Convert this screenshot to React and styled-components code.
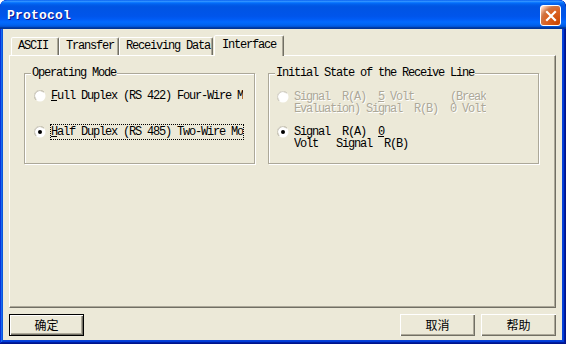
import React from "react";
import styled, { createGlobalStyle } from "styled-components";

const GlobalStyle = createGlobalStyle`
  html, body {
    margin: 0;
    padding: 0;
    background: #fff;
  }
  body {
    font-family: "Liberation Mono", "DejaVu Sans Mono", monospace;
    font-size: 12px;
  }
`;

const mono = `
  font-family: "Liberation Mono", "DejaVu Sans Mono", monospace;
  font-size: 12px;
  letter-spacing: -1.2px;
`;

const Window = styled.div`
  width: 566px;
  height: 344px;
  box-sizing: border-box;
  display: flex;
  flex-direction: column;
  background: #0842d6;
  border-radius: 7px 7px 0 0;
  overflow: hidden;
  box-shadow: inset -1px -1px #00138c, inset 1px 1px #0831d9,
    inset -2px -2px #001ea0, inset 2px 2px #166aee, inset -3px -3px #003bda,
    inset 3px 3px #0855dd;
`;

const TitleBar = styled.div`
  flex: none;
  height: 29px;
  display: flex;
  align-items: center;
  justify-content: space-between;
  padding: 0 5px 0 7px;
  border-radius: 7px 7px 0 0;
  background: linear-gradient(
    180deg,
    #0058ee 0%,
    #3593ff 4%,
    #288eff 6%,
    #127dff 8%,
    #036ffc 10%,
    #0262ee 14%,
    #0057e5 20%,
    #0054e3 24%,
    #0055eb 56%,
    #005bf5 66%,
    #026afe 76%,
    #0062ef 86%,
    #0052d6 92%,
    #0040ab 94%,
    #003092 100%
  );
`;

const TitleText = styled.span`
  font-family: "Liberation Mono", "DejaVu Sans Mono", monospace;
  font-weight: bold;
  font-size: 13px;
  letter-spacing: 0.2px;
  color: #fff;
  text-shadow: 1px 1px #0f1089;
  margin-top: 2px;
`;

const CloseButton = styled.button`
  width: 21px;
  height: 21px;
  box-sizing: border-box;
  margin-top: 2px;
  padding: 0;
  display: grid;
  place-items: center;
  border: 1px solid #fff;
  border-radius: 3px;
  background: radial-gradient(
    circle at 90% 90%,
    #cc4600 0%,
    #dc6527 55%,
    #cd7546 70%,
    #ffccb2 90%,
    #fff 100%
  );
`;

const Client = styled.div`
  flex: 1;
  min-height: 0;
  margin: 0 4px 4px 3px;
  padding: 6px 6px 4px 6px;
  background: #ece9d8;
  display: flex;
  flex-direction: column;
`;

const TabStrip = styled.div`
  display: flex;
  align-items: flex-end;
  height: 21px;
  padding-left: 2px;
  margin-bottom: -1px;
`;

const Tab = styled.div`
  ${mono}
  box-sizing: border-box;
  width: ${(p) => p.$w}px;
  height: ${(p) => (p.$active ? 21 : 18)}px;
  margin-bottom: ${(p) => (p.$active ? 0 : 1)}px;
  margin-left: ${(p) => (p.$active ? 1 : 0)}px;
  padding-left: ${(p) => (p.$active ? 7 : 6)}px;
  line-height: ${(p) => (p.$active ? 18 : 16)}px;
  border: 1px solid;
  border-bottom: none;
  border-color: #fff #716f64 transparent #fff;
  border-radius: 2px 2px 0 0;
  box-shadow: inset -1px 0 #aca899;
  background: #ece9d8;
  color: #000;
  white-space: nowrap;
  position: ${(p) => (p.$active ? "relative" : "static")};
`;

const Panel = styled.div`
  flex: 1;
  min-height: 0;
  box-sizing: border-box;
  border: 1px solid;
  border-color: #fff #716f64 #716f64 #fff;
  box-shadow: inset -1px -1px #aca899;
  display: flex;
  align-items: flex-start;
  gap: 13px;
  padding: 11px 0 0 14px;
`;

const Group = styled.fieldset`
  margin: 0;
  padding: 0;
  min-width: 0;
  box-sizing: border-box;
  width: ${(p) => p.$w}px;
  height: 97px;
  border: 1px solid #aca899;
  box-shadow: inset 1px 1px #fff, 1px 1px #fff;
`;

const Legend = styled.legend`
  ${mono}
  margin-left: 6px;
  padding: 0 1px;
  line-height: 12px;
  color: #000;
  background: #ece9d8;
`;

const RadioList = styled.div`
  display: flex;
  flex-direction: column;
  padding-top: ${(p) => p.$top}px;
  padding-left: ${(p) => p.$inset}px;
  gap: ${(p) => p.$gap}px;
`;

const Row = styled.div`
  display: flex;
  align-items: ${(p) => (p.$multi ? "flex-start" : "center")};
  gap: 4px;
  svg {
    flex: none;
    margin-top: ${(p) => (p.$multi ? 1 : 0)}px;
  }
`;

const Label = styled.span`
  ${mono}
  display: block;
  box-sizing: content-box;
  width: ${(p) => (p.$w ? `${p.$w}px` : "auto")};
  overflow: hidden;
  white-space: pre;
  line-height: ${(p) => p.$lh}px;
  border: 1px dotted ${(p) => (p.$focused ? "#000" : "transparent")};
  color: ${(p) => (p.$disabled ? "#aca899" : "#000")};
  text-shadow: ${(p) => (p.$disabled ? "1px 1px #fff" : "none")};
  u {
    text-underline-offset: 1px;
  }
`;

const Footer = styled.div`
  flex: none;
  display: flex;
  justify-content: space-between;
  margin-top: 6px;
`;

const ButtonGroup = styled.div`
  display: flex;
  gap: 6px;
`;

const Button = styled.button`
  width: 75px;
  height: 22px;
  box-sizing: border-box;
  padding: 0;
  background: #ece9d8;
  font-family: "Noto Sans CJK SC", "Noto Sans", sans-serif;
  font-size: 12px;
  line-height: 18px;
  color: #000;
  border: ${(p) => (p.$default ? "1px solid #000" : "none")};
  box-shadow: inset 1px 1px #fff, inset -1px -1px #716f64,
    inset -2px -2px #aca899;
`;

function Radio({ checked, disabled }) {
  return (
    <svg width="12" height="12" viewBox="0 0 12 12">
      <circle cx="6" cy="6" r="5.5" fill="#fff" />
      <path
        d="M2.1 9.9 A5.5 5.5 0 0 1 9.9 2.1"
        fill="none"
        stroke={disabled ? "#bdbaad" : "#aca899"}
      />
      <path
        d="M1.8 8.6 A4.6 4.6 0 0 1 8.6 1.8"
        fill="none"
        stroke={disabled ? "#dedbd0" : "#d8d5c8"}
      />
      {checked && <circle cx="6" cy="6" r="2" fill="#000" />}
    </svg>
  );
}

function CloseIcon() {
  return (
    <svg width="12" height="12" viewBox="0 0 12 12">
      <path
        d="M2 2 L10 10 M10 2 L2 10"
        stroke="#fff"
        strokeWidth="2.2"
        strokeLinecap="square"
      />
    </svg>
  );
}

const tabs = [
  { label: "ASCII", w: 48 },
  { label: "Transfer", w: 60 },
  { label: "Receiving Data", w: 94 },
  { label: "Interface", w: 70, active: true },
];

export default function App() {
  return (
    <>
      <GlobalStyle />
      <Window>
        <TitleBar>
          <TitleText>Protocol</TitleText>
          <CloseButton aria-label="Close">
            <CloseIcon />
          </CloseButton>
        </TitleBar>
        <Client>
          <TabStrip>
            {tabs.map((t) => (
              <Tab key={t.label} $w={t.w} $active={t.active}>
                {t.label}
              </Tab>
            ))}
          </TabStrip>
          <Panel>
            <Group $w={231}>
              <Legend>Operating Mode</Legend>
              <RadioList $top={9} $gap={20} $inset={9}>
                <Row>
                  <Radio />
                  <Label $w={192} $lh={14}>
                    <u>F</u>ull Duplex (RS 422) Four-Wire Mode
                  </Label>
                </Row>
                <Row>
                  <Radio checked />
                  <Label $w={192} $lh={14} $focused>
                    <u>H</u>alf Duplex (RS 485) Two-Wire Mode
                  </Label>
                </Row>
              </RadioList>
            </Group>
            <Group $w={271}>
              <Legend>Initial State of the Receive Line</Legend>
              <RadioList $top={11} $gap={9} $inset={8}>
                <Row $multi>
                  <Radio disabled />
                  <Label $lh={12} $disabled>
                    {"Signal  R(A)  "}
                    <u>5</u>
                    {" Volt      (Break\nEvaluation) Signal  R(B)  0 Volt"}
                  </Label>
                </Row>
                <Row $multi>
                  <Radio checked />
                  <Label $lh={12}>
                    {"Signal  R(A)  "}
                    <u>0</u>
                    {"\nVolt   Signal  R(B)"}
                  </Label>
                </Row>
              </RadioList>
            </Group>
          </Panel>
          <Footer>
            <Button $default>确定</Button>
            <ButtonGroup>
              <Button>取消</Button>
              <Button>帮助</Button>
            </ButtonGroup>
          </Footer>
        </Client>
      </Window>
    </>
  );
}
